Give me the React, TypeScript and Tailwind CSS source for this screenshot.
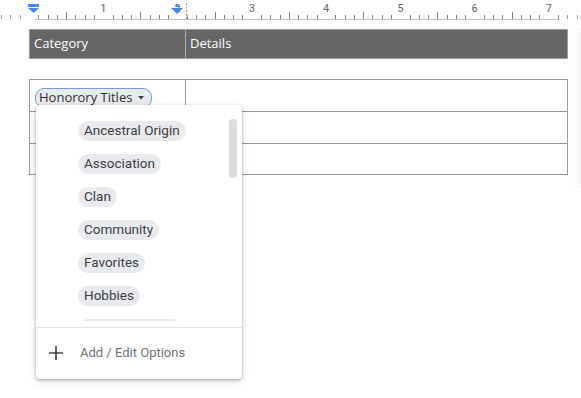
import React from "react";

const INCH = 74.25;
const ORIGIN = 29;

function Ruler() {
  const ticks: React.ReactNode[] = [];
  for (let i = -3; i < 8 * 8; i++) {
    const x = ORIGIN + (i * INCH) / 8;
    if (x < 0 || x > 581) continue;
    const mod = ((i % 8) + 8) % 8;
    if (mod === 0) continue;
    const tall = mod === 4;
    const inMargin = x < 35 || x > 560;
    ticks.push(
      <line
        key={i}
        x1={Math.round(x) + 0.5}
        x2={Math.round(x) + 0.5}
        y1={tall ? 12 : 15}
        y2={19}
        stroke={inMargin ? "#9aa0a6" : "#80868b"}
        strokeWidth={1}
      />
    );
  }
  const nums = [1, 2, 3, 4, 5, 6, 7];
  return (
    <svg width={581} height={22} className="block">
      <rect x={0} y={0} width={581} height={22} fill="#ffffff" />
      <line x1={35} x2={560} y1={19.5} y2={19.5} stroke="#bdc1c6" strokeWidth={1} />
      {ticks}
      {nums.map((n) => (
        <text
          key={n}
          x={ORIGIN + n * INCH}
          y={12}
          textAnchor="middle"
          fontSize={11}
          fontFamily="Roboto, Arial, sans-serif"
          fill="#5f6368"
        >
          {n}
        </text>
      ))}
      {/* left indent marker */}
      <rect x={28} y={4} width={11} height={3} fill="#4285f4" />
      <path d="M28 8 L39 8 L33.5 13 Z" fill="#4285f4" />
      {/* right marker */}
      <path d="M171 8 L183 8 L177 14 Z" fill="#4285f4" />
      <path d="M176 4 L180 7 L176 7 Z" fill="#4285f4" />
      <line x1={186.5} x2={186.5} y1={3} y2={20} stroke="#9aa0a6" strokeDasharray="2 1.5" />
    </svg>
  );
}

const options = [
  "Ancestral Origin",
  "Association",
  "Clan",
  "Community",
  "Favorites",
  "Hobbies",
  "Honorory Titles",
];

export default function App() {
  return (
    <div className="relative w-[581px] h-[398px] overflow-hidden bg-white" style={{ fontFamily: "Roboto, Arial, sans-serif" }}>
      <Ruler />
      <div className="absolute right-0 top-[28px] w-[7px] h-[160px] bg-gradient-to-r from-white to-[#f3f3f3]" />
      <div className="pl-[29px] pt-[7px] w-[568px]">
        {/* header table */}
        <div className="flex h-[30px] bg-[#666666] border border-[#9e9e9e] text-white text-[13px]" style={{ fontFamily: "'Open Sans', sans-serif" }}>
          <div className="w-[156px] border-r border-[#b0b0b0] flex items-center pl-[4px]">Category</div>
          <div className="flex-1 flex items-center pl-[4px]">Details</div>
        </div>
        {/* body table */}
        <div className="mt-[20px] border border-[#9a9a9a]">
          <div className="flex h-[32px] border-b border-[#9a9a9a]">
            <div className="w-[156px] border-r border-[#9a9a9a] pl-[5px] pt-[5px]">
              <div
                className="inline-flex items-center h-[20px] pl-[3px] pr-[7px] rounded-[9px] border-[1.5px] border-[#6c9bef] bg-[#e8eaed] text-[13px] text-[#2d2d2d]"
                style={{ fontFamily: "'Open Sans', sans-serif" }}
              >
                Honorory Titles
                <svg width={6} height={4} className="ml-[6px]" viewBox="0 0 6 4">
                  <path d="M0 0 L6 0 L3 3.5 Z" fill="#3c4043" />
                </svg>
              </div>
            </div>
            <div className="flex-1" />
          </div>
          <div className="flex h-[32px] border-b border-[#9a9a9a]">
            <div className="w-[156px] border-r border-[#9a9a9a]" />
            <div className="flex-1" />
          </div>
          <div className="flex h-[30px]">
            <div className="w-[156px] border-r border-[#9a9a9a]" />
            <div className="flex-1" />
          </div>
        </div>
      </div>

      {/* dropdown */}
      <div className="absolute left-[36px] top-[105px] w-[206px] h-[274px] bg-white rounded-[4px] shadow-[0_1px_3px_rgba(0,0,0,0.3),0_3px_8px_rgba(0,0,0,0.12)] flex flex-col">
        <div className="relative h-[216px] overflow-hidden">
          <div className="flex flex-col items-start gap-[13px] pt-[16px] pl-[42px]">
            {options.map((o) => (
              <span
                key={o}
                className="flex items-center h-[20px] px-[6px] rounded-full bg-[#e8eaed] text-[13.5px] leading-none text-[#3c4043]"
              >
                {o}
              </span>
            ))}
          </div>
          <div className="absolute right-[5px] top-[14px] w-[8px] h-[59px] rounded-full bg-[#dadce0]" />
        </div>
        <div className="h-[6px]" />
        <div className="h-px bg-[#e3e3e3]" />
        <div className="flex items-center h-[50px] pl-[12px]">
          <svg width={16} height={16} viewBox="0 0 16 16">
            <path d="M8 1 V15 M1 8 H15" stroke="#3c4043" strokeWidth={1.6} fill="none" />
          </svg>
          <span className="ml-[16px] text-[13px] text-[#6f7377]">Add / Edit Options</span>
        </div>
      </div>
    </div>
  );
}
